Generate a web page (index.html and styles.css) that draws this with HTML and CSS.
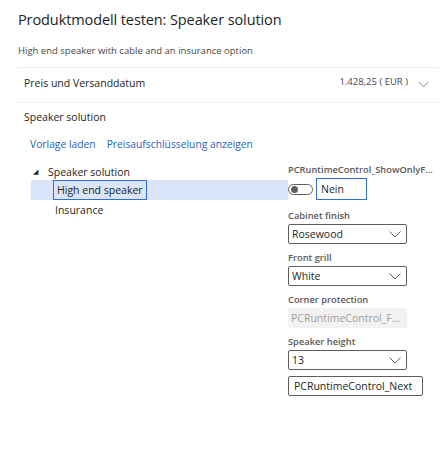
FILE: index.html
```html
<!DOCTYPE html>
<html lang="de">
<head>
<meta charset="utf-8">
<link rel="stylesheet" href="styles.css">
</head>
<body>
<div class="page">
  <h1 class="title">Produktmodell testen: Speaker solution</h1>
  <p class="subtitle">High end speaker with cable and an insurance option</p>
  <div class="price-row">
    <span class="price-label">Preis und Versanddatum</span>
    <span class="price-value">1.428,25 ( EUR )</span>
    <svg class="chev" width="11" height="7" viewBox="0 0 11 7"><path d="M0.5 0.8 L5.5 5.8 L10.5 0.8" fill="none" stroke="#8a8886" stroke-width="1"/></svg>
  </div>
  <div class="section-title">Speaker solution</div>
  <div class="links">
    <a class="link">Vorlage laden</a>
    <a class="link">Preisaufschlüsselung anzeigen</a>
  </div>
  <div class="main">
    <div class="tree">
      <div class="tree-row root"><span class="tri">◢</span><span>Speaker solution</span></div>
      <div class="tree-row selected"><span class="node-box">High end speaker</span></div>
      <div class="tree-row child"><span>Insurance</span></div>
    </div>
    <div class="form">
      <div class="field toggle-field">
        <div class="label">PCRuntimeControl_ShowOnlyF...</div>
        <div class="toggle-line">
          <span class="toggle"><span class="knob"></span></span>
          <span class="nein">Nein</span>
        </div>
      </div>
      <div class="field">
        <div class="label">Cabinet finish</div>
        <div class="select"><span>Rosewood</span><svg class="sel-chev" width="12" height="7" viewBox="0 0 12 7"><path d="M0.5 0.5 L6 6 L11.5 0.5" fill="none" stroke="#605e5c" stroke-width="1"/></svg></div>
      </div>
      <div class="field">
        <div class="label">Front grill</div>
        <div class="select"><span>White</span><svg class="sel-chev" width="12" height="7" viewBox="0 0 12 7"><path d="M0.5 0.5 L6 6 L11.5 0.5" fill="none" stroke="#605e5c" stroke-width="1"/></svg></div>
      </div>
      <div class="field">
        <div class="label">Corner protection</div>
        <div class="disabled">PCRuntimeControl_F...</div>
      </div>
      <div class="field">
        <div class="label">Speaker height</div>
        <div class="select"><span>13</span><svg class="sel-chev" width="12" height="7" viewBox="0 0 12 7"><path d="M0.5 0.5 L6 6 L11.5 0.5" fill="none" stroke="#605e5c" stroke-width="1"/></svg></div>
        <div class="textbox">PCRuntimeControl_Next</div>
      </div>
    </div>
  </div>
</div>
</body>
</html>
```

FILE: styles.css
```css
* { box-sizing: border-box; }
body {
  margin: 0;
  background: #ffffff;
  font-family: "Open Sans", "Noto Sans", sans-serif;
  color: #323130;
}
.page {
  padding: 10px 7px 0 18px;
  width: 445px;
}
.title {
  margin: 0;
  font-size: 14.5px;
  font-weight: 400;
  line-height: 20px;
  letter-spacing: -0.1px;
  color: #201f1e;
}
.subtitle {
  margin: 14px 0 0 0;
  font-size: 9.5px;
  line-height: 14px;
  color: #484644;
}
.price-row {
  margin-top: 9px;
  height: 36px;
  border-top: 1px solid #efefef;
  border-bottom: 1px solid #efefef;
  display: flex;
  align-items: center;
  padding: 0 9px 4px 6px;
  font-size: 10.5px;
}
.price-label { flex: 1; color: #252423; }
.price-value { font-size: 9.5px; color: #484644; margin-right: 10px; margin-top: -3px; }
.chev { margin-top: 3px; }
.section-title {
  padding-left: 6px;
  margin-top: 6px;
  font-size: 10.5px;
  line-height: 16px;
  color: #252423;
}
.links {
  padding-left: 12px;
  margin-top: 11px;
  display: flex;
  gap: 11px;
  font-size: 10.3px;
  line-height: 16px;
}
.link { color: #1f5fbf; }
.main {
  display: grid;
  grid-template-columns: 270px 1fr;
  margin-top: 4px;
}
.tree {
  padding-left: 13px;
  padding-top: 8px;
  font-size: 10.5px;
}
.tree-row {
  height: 20px;
  display: flex;
  align-items: center;
  color: #252423;
}
.tree-row.root { height: 16px; padding-left: 2px; }
.tri { font-size: 7px; color: #252423; width: 15px; margin-top: -2px; }
.tree-row.selected {
  background: #dbe5f9;
  padding-left: 22px;
}
.node-box {
  height: 20px;
  width: 94px;
  border: 1px solid #2f6fd6;
  display: flex;
  align-items: center;
  padding-left: 3px;
  color: #201f1e;
}
.tree-row.child { padding-left: 24px; height: 20px; }
.form {
  padding-top: 7px;
}
.field { margin-bottom: 7px; }
.toggle-field { margin-bottom: 9px; }
.label {
  font-size: 9.3px;
  line-height: 13px;
  font-weight: 600;
  color: #5a5855;
  margin-bottom: 2px;
  white-space: nowrap;
}
.toggle-line {
  display: flex;
  align-items: center;
  gap: 3px;
}
.toggle {
  width: 25px;
  height: 11px;
  border: 1px solid #605e5c;
  border-radius: 6px;
  display: flex;
  align-items: center;
  padding-left: 2px;
}
.knob {
  width: 7px;
  height: 7px;
  border-radius: 50%;
  background: #605e5c;
}
.nein {
  width: 51px;
  height: 22px;
  border: 1px solid #2f6fd6;
  font-size: 10.5px;
  display: flex;
  align-items: center;
  padding-left: 4px;
  color: #201f1e;
}
.select {
  width: 119px;
  height: 20px;
  border: 1px solid #605e5c;
  border-radius: 2px;
  display: flex;
  align-items: center;
  justify-content: space-between;
  padding: 0 5px 0 3px;
  font-size: 10.5px;
  color: #201f1e;
}
.disabled {
  width: 119px;
  height: 20px;
  background: #f3f2f1;
  border-radius: 2px;
  display: flex;
  align-items: center;
  padding-left: 3px;
  font-size: 10.5px;
  color: #a19f9d;
}
.textbox {
  margin-top: 6px;
  width: 135px;
  height: 20px;
  border: 1px solid #605e5c;
  border-radius: 2px;
  display: flex;
  align-items: center;
  padding-left: 5px;
  font-size: 10.5px;
  color: #201f1e;
}
```
